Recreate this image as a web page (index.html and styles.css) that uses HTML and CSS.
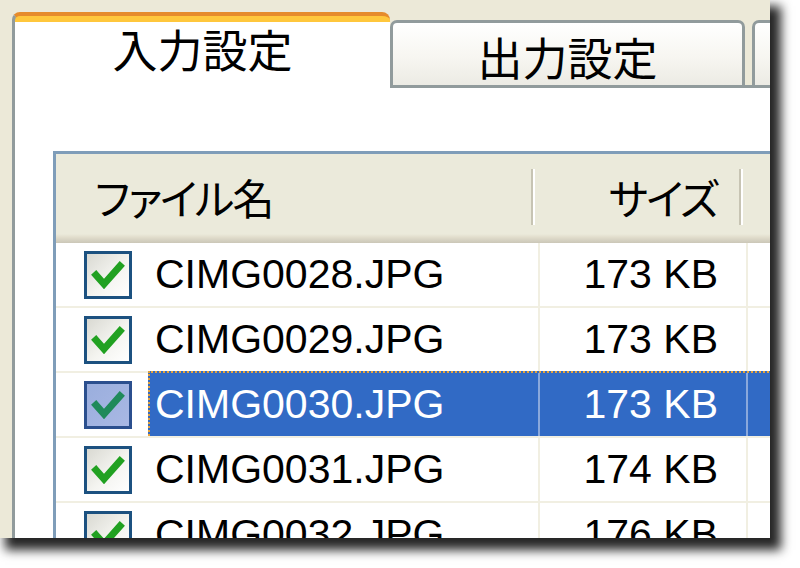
FILE: index.html
```html
<!DOCTYPE html>
<html lang="ja">
<head>
    <meta charset="UTF-8">
    <title>入力設定</title>
    <link rel="stylesheet" href="styles.css">
</head>
<body>
    <div class="window">
        <div class="tabs">
            <div class="tab tab-active">入力設定</div>
            <div class="tab">出力設定</div>
            <div class="tab tab-next"></div>
        </div>

        <div class="panel">
            <div class="list">
                <div class="list-header">
                    <div class="col col-name"><span class="col-label">ファイル名</span><i class="sep"></i></div>
                    <div class="col col-size"><span class="col-label">サイズ</span><i class="sep"></i></div>
                    <div class="col col-rest"></div>
                </div>

                <div class="row">
                    <div class="cell-check"><span class="checkbox"><svg viewBox="0 0 42 42"><polyline points="9,21 17,30 33,12"/></svg></span></div>
                    <div class="item">
                        <div class="cell cell-name">CIMG0028.JPG</div>
                        <div class="cell cell-size">173 KB</div>
                        <div class="cell cell-rest"></div>
                    </div>
                </div>
                <div class="row">
                    <div class="cell-check"><span class="checkbox"><svg viewBox="0 0 42 42"><polyline points="9,21 17,30 33,12"/></svg></span></div>
                    <div class="item">
                        <div class="cell cell-name">CIMG0029.JPG</div>
                        <div class="cell cell-size">173 KB</div>
                        <div class="cell cell-rest"></div>
                    </div>
                </div>
                <div class="row selected">
                    <div class="cell-check"><span class="checkbox"><svg viewBox="0 0 42 42"><polyline points="9,21 17,30 33,12"/></svg></span></div>
                    <div class="item">
                        <div class="cell cell-name">CIMG0030.JPG</div>
                        <div class="cell cell-size">173 KB</div>
                        <div class="cell cell-rest"></div>
                    </div>
                </div>
                <div class="row">
                    <div class="cell-check"><span class="checkbox"><svg viewBox="0 0 42 42"><polyline points="9,21 17,30 33,12"/></svg></span></div>
                    <div class="item">
                        <div class="cell cell-name">CIMG0031.JPG</div>
                        <div class="cell cell-size">174 KB</div>
                        <div class="cell cell-rest"></div>
                    </div>
                </div>
                <div class="row">
                    <div class="cell-check"><span class="checkbox"><svg viewBox="0 0 42 42"><polyline points="9,21 17,30 33,12"/></svg></span></div>
                    <div class="item">
                        <div class="cell cell-name">CIMG0032.JPG</div>
                        <div class="cell cell-size">176 KB</div>
                        <div class="cell cell-rest"></div>
                    </div>
                </div>
            </div>
        </div>
    </div>
</body>
</html>
```

FILE: styles.css
```css
body {
    margin: 0;
    min-height: 568px;
    background-color: #ffffff;
    font-family: "Liberation Sans", "Noto Sans CJK JP", sans-serif;
    color: #000000;
}

.window {
    width: 770px;
    height: 538px;
    box-sizing: border-box;
    padding: 12px 0 0 12px;
    display: flex;
    flex-direction: column;
    background-color: #ece9d8;
    overflow: hidden;
    box-shadow: 8px 9px 10px 3px rgba(0, 0, 0, 0.85);
}

/* tabs */
.tabs {
    display: flex;
    align-items: flex-end;
    height: 73px;
    position: relative;
    z-index: 1;
    flex-shrink: 0;
}

.tab {
    box-sizing: border-box;
    width: 355px;
    height: 65px;
    padding-top: 4px;
    display: flex;
    align-items: center;
    justify-content: center;
    border: 3px solid #919b9c;
    border-bottom: none;
    border-radius: 7px 7px 0 0;
    background: linear-gradient(#ffffff, #f7f6f1 55%, #ecebe4);
    font-family: "Noto Sans CJK JP", sans-serif;
    font-size: 45px;
    line-height: 1;
    flex-shrink: 0;
}

.tab-active {
    width: 378px;
    height: 76px;
    margin-bottom: -3px;
    padding: 0 0 8px 0;
    border: none;
    border-left: 3px solid #919b9c;
    border-top: 4px solid #e68b2c;
    border-radius: 8px 8px 0 0;
    background: linear-gradient(#ffc73c, #ffc73c) no-repeat top / 100% 6px, #ffffff;
}

.tab-next {
    width: 60px;
    margin-left: 7px;
}

/* panel */
.panel {
    flex: 1;
    background-color: #ffffff;
    border-top: 3px solid #919b9c;
    border-left: 3px solid #919b9c;
    padding: 63px 0 0 38px;
}

.list {
    width: 800px;
    border-top: 3px solid #7f9db9;
    border-left: 3px solid #7f9db9;
}

.list-header {
    display: flex;
    height: 89px;
    background: linear-gradient(#ebeadb 0, #ebeadb calc(100% - 9px), #e2decd calc(100% - 6px), #d6d2c2 calc(100% - 3px), #cbc7b8 100%);
}

.col {
    display: flex;
    align-items: center;
    box-sizing: border-box;
    padding-bottom: 4px;
    font-size: 42px;
    font-feature-settings: "palt";
}

.col-name {
    width: 484px;
    padding-left: 39px;
}

.col-size {
    width: 208px;
    justify-content: flex-end;
}

.col-label {
    font-family: "Noto Sans CJK JP", sans-serif;
    letter-spacing: -2px;
}

.sep {
    width: 4px;
    height: 56px;
    margin-left: auto;
    margin-right: 5px;
    background: linear-gradient(to right, #c7c4b3 50%, #ffffff 50%);
}

.col-size .sep {
    margin-left: 22px;
}

/* rows */
.row {
    display: flex;
    height: 63px;
    border-bottom: 2px solid #f1efe2;
}

.cell-check {
    width: 92px;
    box-sizing: border-box;
    padding-left: 28px;
    display: flex;
    align-items: center;
}

.checkbox {
    width: 48px;
    height: 48px;
    box-sizing: border-box;
    border: 3px solid #1c5180;
    background: linear-gradient(135deg, #d9d9d2, #f4f4f0 55%, #ffffff);
    display: flex;
}

.checkbox svg {
    width: 42px;
    height: 42px;
}

.checkbox polyline {
    fill: none;
    stroke: #21a121;
    stroke-width: 7;
    stroke-linecap: square;
}

.item {
    flex: 1;
    display: flex;
    border-top: 2px dotted transparent;
    border-left: 2px dotted transparent;
    margin-top: -2px;
}

.cell {
    display: flex;
    align-items: center;
    box-sizing: border-box;
    font-size: 41px;
}

.cell-name {
    width: 390px;
    padding-left: 5px;
    border-right: 2px solid #f1efe2;
}

.cell-size {
    width: 208px;
    padding-right: 28px;
    justify-content: flex-end;
    border-right: 2px solid #f1efe2;
}

.cell-rest {
    flex: 1;
}

.selected .item {
    background-color: #316ac5;
    color: #ffffff;
    border-color: #e5a33b;
}

.selected .cell-name,
.selected .cell-size {
    border-right-color: #8aa8dc;
}

.selected .checkbox {
    border-color: #2b4f8e;
    background: linear-gradient(135deg, #9aaedd, #a9b8e4);
}

.selected .checkbox polyline {
    stroke: #1f8a5a;
}
```
